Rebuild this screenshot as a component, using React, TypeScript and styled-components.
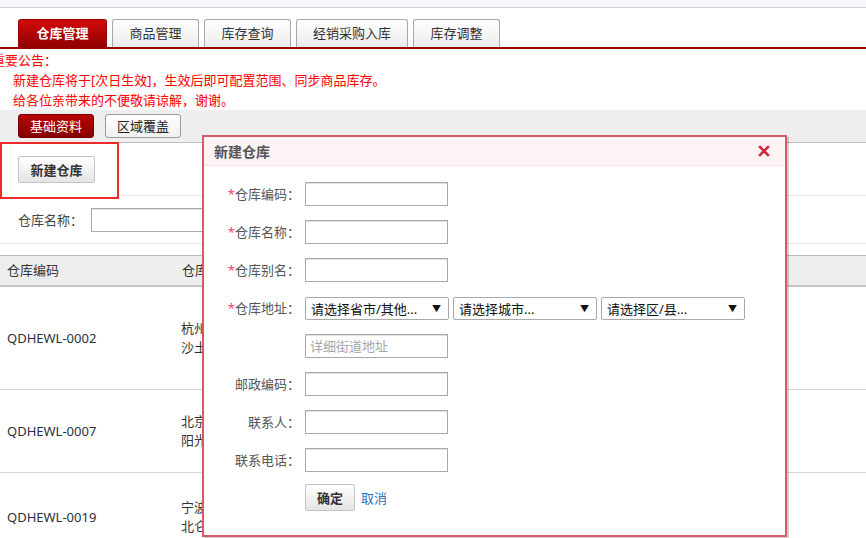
import styled, { createGlobalStyle } from 'styled-components'

const GlobalStyle = createGlobalStyle`
  html, body {
    margin: 0;
    padding: 0;
    background: #fff;
  }
  body {
    font-family: 'Noto Sans', 'Noto Sans CJK SC', sans-serif;
    font-size: 13px;
    color: #333;
    overflow: hidden;
  }
`

const mainTabs = ['仓库管理', '商品管理', '库存查询', '经销采购入库', '库存调整']

const rows = [
  { code: 'QDHEWL-0002', name: ['杭州仓', '沙土路'], height: 102 },
  { code: 'QDHEWL-0007', name: ['北京仓', '阳光路'], height: 82 },
  { code: 'QDHEWL-0019', name: ['宁波仓', '北仑区'], height: 88 },
]

const fields = [
  { label: '仓库编码', required: true },
  { label: '仓库名称', required: true },
  { label: '仓库别名', required: true },
]

const contactFields = ['邮政编码', '联系人', '联系电话']

const regionSelects = ['请选择省市/其他...', '请选择城市...', '请选择区/县...']

export default function App() {
  return (
    <Page>
      <GlobalStyle />
      <TopStrip />
      <MainTabBar>
        {mainTabs.map((t, i) => (
          <MainTab key={t} active={i === 0}>
            {t}
          </MainTab>
        ))}
      </MainTabBar>

      <Notice>
        <NoticeTitle>重要公告：</NoticeTitle>
        <NoticeLine>新建仓库将于[次日生效]，生效后即可配置范围、同步商品库存。</NoticeLine>
        <NoticeLine>给各位亲带来的不便敬请谅解，谢谢。</NoticeLine>
      </Notice>

      <SubBar>
        <SubTab active>基础资料</SubTab>
        <SubTab>区域覆盖</SubTab>
      </SubBar>

      <Toolbar>
        <Highlight>
          <GrayButton>新建仓库</GrayButton>
        </Highlight>
      </Toolbar>

      <SearchRow>
        <SearchLabel>仓库名称：</SearchLabel>
        <TextInput w={200} />
      </SearchRow>

      <Table>
        <HeadRow>
          <HeadCell>仓库编码</HeadCell>
          <HeadCell>仓库名称</HeadCell>
        </HeadRow>
        {rows.map((r) => (
          <BodyRow key={r.code} h={r.height}>
            <CodeCell>{r.code}</CodeCell>
            <NameCell>
              {r.name.map((n) => (
                <div key={n}>{n}</div>
              ))}
            </NameCell>
          </BodyRow>
        ))}
      </Table>

      <Dialog>
        <DialogHeader>
          <DialogTitle>新建仓库</DialogTitle>
          <CloseIcon width="12" height="12" viewBox="0 0 12 12">
            <path d="M2 2 L10 10 M10 2 L2 10" stroke="#d0283a" strokeWidth="2.6" strokeLinecap="square" />
          </CloseIcon>
        </DialogHeader>

        <Form>
          {fields.map((f) => (
            <FormRow key={f.label}>
              <Label>
                {f.required && <Star>*</Star>}
                {f.label}：
              </Label>
              <TextInput w={143} />
            </FormRow>
          ))}

          <FormRow>
            <Label>
              <Star>*</Star>仓库地址：
            </Label>
            <SelectGroup>
              {regionSelects.map((s) => (
                <FakeSelect key={s}>
                  <span>{s}</span>
                  <Arrow>▼</Arrow>
                </FakeSelect>
              ))}
            </SelectGroup>
          </FormRow>

          <FormRow>
            <Label />
            <TextInput w={143} placeholder="详细街道地址" />
          </FormRow>

          {contactFields.map((c) => (
            <FormRow key={c}>
              <Label>{c}：</Label>
              <TextInput w={143} />
            </FormRow>
          ))}

          <FormRow>
            <Label />
            <Actions>
              <GrayButton small>确定</GrayButton>
              <CancelLink>取消</CancelLink>
            </Actions>
          </FormRow>
        </Form>
      </Dialog>
    </Page>
  )
}

const Page = styled.div`
  position: relative;
  width: 866px;
  height: 538px;
  overflow: hidden;
`

const TopStrip = styled.div`
  height: 7px;
  background: #f6f8fa;
  border-bottom: 1px solid #cdd2d6;
`

const MainTabBar = styled.div`
  display: flex;
  align-items: flex-end;
  gap: 5px;
  padding: 11px 0 0 18px;
  border-bottom: 2px solid #9a0000;
`

const MainTab = styled.div<{ active?: boolean }>`
  height: 28px;
  box-sizing: border-box;
  padding: 0 16px;
  min-width: ${(p) => (p.active ? '89px' : '87px')};
  line-height: 26px;
  text-align: center;
  border-radius: 3px 3px 0 0;
  border: 1px solid ${(p) => (p.active ? '#a00000' : '#a8a8a8')};
  border-bottom: none;
  font-weight: ${(p) => (p.active ? 'bold' : 'normal')};
  color: ${(p) => (p.active ? '#fff' : '#333')};
  background: ${(p) =>
    p.active
      ? 'linear-gradient(to bottom, #d30a0a, #8e0000)'
      : 'linear-gradient(to bottom, #ffffff, #ececec)'};
`

const Notice = styled.div`
  padding-top: 1px;
  color: #f00;
  line-height: 20px;
`

const NoticeTitle = styled.div`
  margin-left: -8px;
`

const NoticeLine = styled.div`
  padding-left: 13px;
`

const SubBar = styled.div`
  display: flex;
  align-items: center;
  gap: 11px;
  height: 32px;
  padding: 0 18px;
  background: #eeeeee;
  border-bottom: 1px solid #bdbdbd;
`

const SubTab = styled.div<{ active?: boolean }>`
  width: 76px;
  height: 24px;
  box-sizing: border-box;
  line-height: 22px;
  text-align: center;
  border-radius: 3px;
  border: 1px solid ${(p) => (p.active ? '#7a0000' : '#9a9a9a')};
  color: ${(p) => (p.active ? '#fff' : '#222')};
  background: ${(p) =>
    p.active
      ? 'linear-gradient(to bottom, #b80505, #860000)'
      : 'linear-gradient(to bottom, #ffffff, #f0f0f0)'};
`

const Toolbar = styled.div`
  display: flex;
  align-items: flex-start;
  height: 52px;
  border-bottom: 1px solid #e4e4e4;
`

const Highlight = styled.div`
  position: relative;
  z-index: 1;
  width: 119px;
  height: 57px;
  margin-top: -1px;
  box-sizing: border-box;
  padding: 12px 0 0 16px;
  border: 2px solid #ee2b2b;
  background: #fff;
`

const GrayButton = styled.button<{ small?: boolean }>`
  width: ${(p) => (p.small ? '50px' : '77px')};
  height: 27px;
  padding: 0;
  font-family: inherit;
  font-size: 13px;
  font-weight: bold;
  color: #333;
  border: 1px solid #c4c4c4;
  border-radius: 2px;
  background: linear-gradient(to bottom, #ffffff, #e4e4e4);
`

const SearchRow = styled.div`
  display: flex;
  align-items: center;
  height: 47px;
  padding-left: 18px;
  border-bottom: 1px solid #e4e4e4;
`

const SearchLabel = styled.span`
  width: 73px;
  color: #444;
`

const TextInput = styled.input<{ w: number }>`
  width: ${(p) => p.w}px;
  height: 24px;
  box-sizing: border-box;
  margin: 0;
  padding: 0 4px;
  font-family: inherit;
  font-size: 13px;
  border: 1px solid #a9a9a9;
  box-shadow: inset 0 1px 0 #e2e2e2;
  &::placeholder {
    color: #a6a6a6;
  }
`

const Table = styled.div`
  margin-top: 11px;
`

const HeadRow = styled.div`
  display: grid;
  grid-template-columns: 175px 1fr;
  height: 32px;
  box-sizing: border-box;
  background: #eeeeee;
  border-top: 1px solid #bcbcbc;
  border-bottom: 2px solid #c6c6c6;
`

const HeadCell = styled.div`
  padding-left: 7px;
  line-height: 29px;
  color: #333;
`

const BodyRow = styled.div<{ h: number }>`
  display: grid;
  grid-template-columns: 175px 1fr;
  align-items: center;
  height: ${(p) => p.h}px;
  border-bottom: 1px solid #d6d6d6;
`

const CodeCell = styled.div`
  padding-left: 7px;
  color: #2b3040;
`

const NameCell = styled.div`
  padding-left: 6px;
  line-height: 19px;
  color: #333;
`

const Dialog = styled.div`
  position: absolute;
  top: 135px;
  left: 202px;
  width: 585px;
  height: 402px;
  box-sizing: border-box;
  background: #fff;
  border: 2px solid #d45c69;
  box-shadow: 2px 2px 0 rgba(0, 0, 0, 0.18);
  z-index: 5;
`

const DialogHeader = styled.div`
  display: flex;
  align-items: center;
  justify-content: space-between;
  height: 29px;
  box-sizing: border-box;
  padding: 0 15px 0 10px;
  background: #fdf3f4;
  border-bottom: 1px solid #f3e0e2;
`

const DialogTitle = styled.div`
  font-size: 14px;
  font-weight: bold;
  color: #555;
`

const CloseIcon = styled.svg`
  display: block;
`

const Form = styled.div`
  display: flex;
  flex-direction: column;
  gap: 14px;
  padding-top: 16px;
`

const FormRow = styled.div`
  display: grid;
  grid-template-columns: 96px auto;
  column-gap: 5px;
  align-items: center;
  min-height: 24px;
`

const Label = styled.div`
  text-align: right;
  color: #555;
  line-height: 24px;
`

const Star = styled.span`
  color: #f2456a;
`

const SelectGroup = styled.div`
  display: flex;
  gap: 4px;
`

const FakeSelect = styled.div`
  display: flex;
  align-items: center;
  justify-content: space-between;
  width: 144px;
  height: 23px;
  box-sizing: border-box;
  padding: 0 7px 0 5px;
  border: 1px solid #a9a9a9;
  border-radius: 2px;
  background: #fff;
  color: #111;
`

const Arrow = styled.span`
  font-size: 9px;
  color: #111;
`

const Actions = styled.div`
  display: flex;
  align-items: center;
  gap: 6px;
  margin-top: -2px;
`

const CancelLink = styled.a`
  color: #2a6fbf;
  cursor: pointer;
`
